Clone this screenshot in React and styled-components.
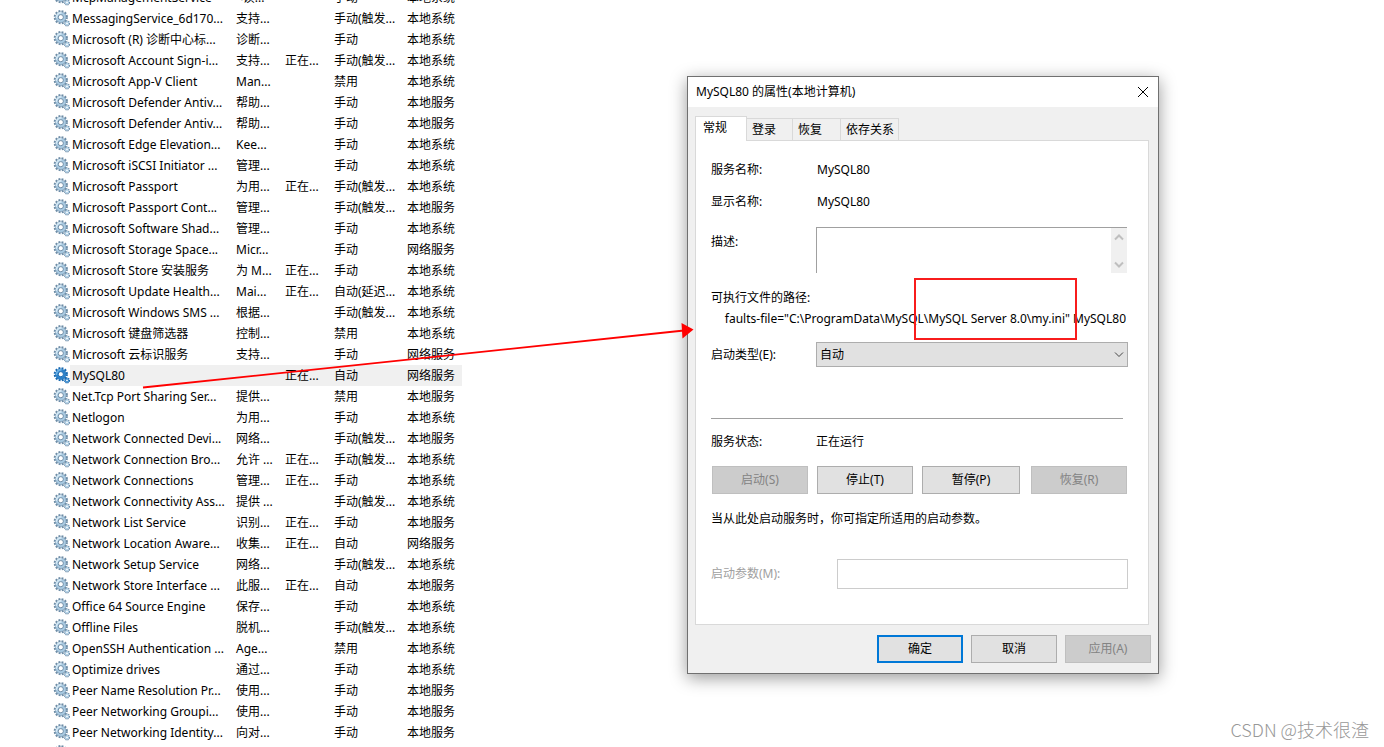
import React from 'react'
import styled, { createGlobalStyle, css } from 'styled-components'

const GlobalStyle = createGlobalStyle`
  * {
    box-sizing: border-box;
  }

  body {
    margin: 0;
    background-color: #fff;
    color: #000;
    font-family: 'Noto Sans', 'Noto Sans CJK SC', sans-serif;
    font-size: 12px;
    line-height: 20px;
  }

  button,
  input,
  textarea,
  select {
    font: inherit;
    color: inherit;
    border-radius: 0;
  }
`

const Desktop = styled.main`
  position: relative;
  height: 100vh;
  overflow: hidden;
`

/* services list */

const ServiceTable = styled.table`
  margin: -13px 0 0 53px;
  border-collapse: collapse;
  table-layout: fixed;
  width: 409px;
`

const ServiceRow = styled.tr`
  height: 21px;

  td:not(:first-child) {
    background-color: ${(props) => (props.$selected ? '#f0f0f0' : 'transparent')};
  }
`

const Cell = styled.td`
  padding: 0 0 0 2px;
  height: 21px;
  line-height: 21px;
  white-space: nowrap;
`

const IconCell = styled.td`
  padding: 0;
  line-height: 0;

  svg {
    display: block;
  }
`

/* properties window */

const Dialog = styled.section`
  position: absolute;
  left: 687px;
  top: 76px;
  width: 472px;
  border: 1px solid #707070;
  background-color: #f0f0f0;
  box-shadow: 0 4px 16px rgba(0, 0, 0, 0.4);
`

const TitleBar = styled.header`
  display: flex;
  align-items: center;
  justify-content: space-between;
  height: 30px;
  padding-left: 8px;
  background-color: #fff;
`

const Title = styled.h1`
  margin: 0;
  font-size: 12px;
  font-weight: normal;
`

const CloseButton = styled.button`
  display: flex;
  align-items: center;
  justify-content: center;
  width: 30px;
  height: 28px;
  padding: 0;
  border: none;
  background: none;
`

const TabList = styled.div`
  display: flex;
  align-items: flex-end;
  margin: 9px 9px 0 7px;
`

const Tab = styled.button`
  width: ${(props) => props.$width}px;
  height: 22px;
  padding: 0 5px;
  border: 1px solid #d9d9d9;
  border-width: 1px 1px 0 0;
  background-color: #f0f0f0;
  text-align: left;
  white-space: nowrap;

  ${(props) =>
    props.$active &&
    css`
      position: relative;
      height: 25px;
      margin-bottom: -1px;
      padding: 0 7px 3px;
      border-left-width: 1px;
      background-color: #fff;
    `}
`

const Panel = styled.div`
  margin: 0 9px 0 7px;
  padding: 13px 20px 35px 15px;
  border: 1px solid #d9d9d9;
  background-color: #fff;
`

const Field = styled.div`
  display: grid;
  grid-template-columns: 105px 1fr;
  align-items: center;
  min-height: ${(props) => props.$height || 20}px;
  margin-top: ${(props) => props.$gap || 0}px;
`

const Label = styled.label`
  white-space: nowrap;
  color: ${(props) => (props.$disabled ? '#a0a0a0' : 'inherit')};
`

const DescLabel = styled(Label)`
  align-self: start;
  padding-top: 5px;
`

const Value = styled.span`
  padding-left: 1px;
`

const Description = styled.div`
  display: flex;
  height: 46px;
  margin-right: 1px;
  border: 1px solid #a0a0a0;
  border-width: 1px 0 0 1px;
`

const DescriptionText = styled.textarea`
  flex: 1;
  min-width: 0;
  padding: 2px;
  border: none;
  outline: none;
  resize: none;
  overflow: hidden;
`

const ScrollBar = styled.div`
  display: flex;
  flex-direction: column;
  justify-content: space-between;
  align-items: center;
  width: 16px;
  padding: 6px 0 5px;
  background-color: #f0f0f0;
`

const PathLabel = styled.div`
  margin-top: 15px;
`

const Path = styled.div`
  display: flex;
  justify-content: flex-end;
  margin: 1px 2px 0 1px;
  overflow: hidden;
  white-space: nowrap;
`

const SelectBox = styled.div`
  position: relative;

  svg {
    position: absolute;
    right: 4px;
    top: 9px;
    pointer-events: none;
  }
`

const Select = styled.select`
  display: block;
  appearance: none;
  width: 100%;
  height: 25px;
  padding: 0 3px;
  border: 1px solid #adadad;
  background-color: #e1e1e1;
`

const Divider = styled.hr`
  height: 1px;
  margin: 51px 5px 0 0;
  border: none;
  background-color: #a0a0a0;
`

const Button = styled.button`
  width: ${(props) => props.$width || 96}px;
  height: 28px;
  padding: 0;
  border: 1px solid #adadad;
  background-color: #e1e1e1;

  ${(props) =>
    props.$primary &&
    css`
      border: 2px solid #0078d7;
    `}

  &:disabled {
    border-color: #bfbfbf;
    background-color: #cccccc;
    color: #838383;
  }
`

const Controls = styled.div`
  display: flex;
  gap: 9px;
  margin: 14px 1px 0;

  button:last-child {
    margin-left: auto;
  }
`

const Hint = styled.p`
  margin: 15px 0 0;
`

const ParamField = styled.div`
  display: flex;
  align-items: center;
  justify-content: space-between;
  margin-top: 30px;
`

const ParamInput = styled.input`
  width: 291px;
  height: 30px;
  padding: 0 4px;
  border: 1px solid #cccccc;
  background-color: #fff;
`

const Footer = styled.footer`
  display: flex;
  justify-content: flex-end;
  gap: 8px;
  padding: 10px 7px;
`

/* annotations */

const Arrow = styled.svg`
  position: absolute;
  left: 0;
  top: 0;
  pointer-events: none;
`

const Highlight = styled.div`
  position: absolute;
  left: 914px;
  top: 278px;
  width: 163px;
  height: 62px;
  border: 2px solid #f81c1c;
  pointer-events: none;
`

const Watermark = styled.div`
  position: absolute;
  right: 15px;
  bottom: 6px;
  color: #989898;
  font-family: 'Noto Sans CJK SC', sans-serif;
  font-size: 18px;
  font-weight: 300;
  line-height: 24px;
`

const GearIcon = ({ selected }) => {
  const edge = selected ? '#1768b0' : '#6d8ca6'
  const body = selected ? '#2c83cb' : '#a9cbe3'
  const shine = selected ? '#6db2e6' : '#d3e8f5'
  return (
    <svg width="17" height="17" viewBox="0 0 17 17" aria-hidden="true">
      <circle cx="7.8" cy="7.2" r="6.1" fill="none" stroke={edge} strokeWidth="2" strokeDasharray="1.9 1.3" />
      <circle cx="7.8" cy="7.2" r="5.3" fill={body} stroke={edge} strokeWidth="0.6" />
      <path d="M3.6 8a4.2 4.2 0 0 1 5-5" fill="none" stroke={shine} strokeWidth="1.6" />
      <circle cx="7.8" cy="7.2" r="2.6" fill="#fff" stroke={edge} strokeWidth="1" />
      <circle cx="14" cy="13.4" r="2.3" fill="none" stroke={edge} strokeWidth="1.6" strokeDasharray="1.1 0.7" />
      <circle cx="14" cy="13.4" r="1.5" fill="#fff" stroke={body} strokeWidth="1.2" />
    </svg>
  )
}

const Chevron = ({ up, color = '#444', size = 1 }) => (
  <svg width="10" height="7" viewBox="0 0 10 7" aria-hidden="true">
    <path
      d={up ? 'M1 5.5L5 1.5L9 5.5' : 'M1 1.5L5 5.5L9 1.5'}
      fill="none"
      stroke={color}
      strokeWidth={size}
    />
  </svg>
)

const services = [
  ['McpManagementService', '<读...', '', '手动', '本地系统'],
  ['MessagingService_6d170...', '支持...', '', '手动(触发...', '本地系统'],
  ['Microsoft (R) 诊断中心标...', '诊断...', '', '手动', '本地系统'],
  ['Microsoft Account Sign-i...', '支持...', '正在...', '手动(触发...', '本地系统'],
  ['Microsoft App-V Client', 'Man...', '', '禁用', '本地系统'],
  ['Microsoft Defender Antiv...', '帮助...', '', '手动', '本地服务'],
  ['Microsoft Defender Antiv...', '帮助...', '', '手动', '本地服务'],
  ['Microsoft Edge Elevation...', 'Kee...', '', '手动', '本地系统'],
  ['Microsoft iSCSI Initiator ...', '管理...', '', '手动', '本地系统'],
  ['Microsoft Passport', '为用...', '正在...', '手动(触发...', '本地系统'],
  ['Microsoft Passport Cont...', '管理...', '', '手动(触发...', '本地服务'],
  ['Microsoft Software Shad...', '管理...', '', '手动', '本地系统'],
  ['Microsoft Storage Space...', 'Micr...', '', '手动', '网络服务'],
  ['Microsoft Store 安装服务', '为 M...', '正在...', '手动', '本地系统'],
  ['Microsoft Update Health...', 'Mai...', '正在...', '自动(延迟...', '本地系统'],
  ['Microsoft Windows SMS ...', '根据...', '', '手动(触发...', '本地系统'],
  ['Microsoft 键盘筛选器', '控制...', '', '禁用', '本地系统'],
  ['Microsoft 云标识服务', '支持...', '', '手动', '网络服务'],
  ['MySQL80', '', '正在...', '自动', '网络服务'],
  ['Net.Tcp Port Sharing Ser...', '提供...', '', '禁用', '本地服务'],
  ['Netlogon', '为用...', '', '手动', '本地系统'],
  ['Network Connected Devi...', '网络...', '', '手动(触发...', '本地服务'],
  ['Network Connection Bro...', '允许 ...', '正在...', '手动(触发...', '本地系统'],
  ['Network Connections', '管理...', '正在...', '手动', '本地系统'],
  ['Network Connectivity Ass...', '提供 ...', '', '手动(触发...', '本地系统'],
  ['Network List Service', '识别...', '正在...', '手动', '本地服务'],
  ['Network Location Aware...', '收集...', '正在...', '自动', '网络服务'],
  ['Network Setup Service', '网络...', '', '手动(触发...', '本地系统'],
  ['Network Store Interface ...', '此服...', '正在...', '自动', '本地服务'],
  ['Office 64 Source Engine', '保存...', '', '手动', '本地系统'],
  ['Offline Files', '脱机...', '', '手动(触发...', '本地系统'],
  ['OpenSSH Authentication ...', 'Age...', '', '禁用', '本地系统'],
  ['Optimize drives', '通过...', '', '手动', '本地系统'],
  ['Peer Name Resolution Pr...', '使用...', '', '手动', '本地服务'],
  ['Peer Networking Groupi...', '使用...', '', '手动', '本地服务'],
  ['Peer Networking Identity...', '向对...', '', '手动', '本地服务'],
  ['', '', '', '', ''],
]

const ServiceList = () => (
  <ServiceTable>
    <colgroup>
      <col width="17" />
      <col width="164" />
      <col width="49" />
      <col width="49" />
      <col width="73" />
      <col />
    </colgroup>
    <tbody>
      {services.map((service, i) => {
        const selected = service[0] === 'MySQL80'
        return (
          <ServiceRow key={i} $selected={selected}>
            <IconCell>
              <GearIcon selected={selected} />
            </IconCell>
            {service.map((text, j) => (
              <Cell key={j}>{text}</Cell>
            ))}
          </ServiceRow>
        )
      })}
    </tbody>
  </ServiceTable>
)

const Properties = () => (
  <Dialog role="dialog" aria-labelledby="title">
    <TitleBar>
      <Title id="title">MySQL80 的属性(本地计算机)</Title>
      <CloseButton aria-label="关闭">
        <svg width="12" height="12" viewBox="0 0 12 12">
          <path d="M1 1L11 11M11 1L1 11" stroke="#000" strokeWidth="1" />
        </svg>
      </CloseButton>
    </TitleBar>

    <TabList role="tablist">
      <Tab role="tab" aria-selected="true" $active $width={52}>常规</Tab>
      <Tab role="tab" $width={46}>登录</Tab>
      <Tab role="tab" $width={48}>恢复</Tab>
      <Tab role="tab" $width={58}>依存关系</Tab>
    </TabList>

    <Panel role="tabpanel">
      <Field $height={32}>
        <span>服务名称:</span>
        <Value>MySQL80</Value>
      </Field>
      <Field $height={32}>
        <span>显示名称:</span>
        <Value>MySQL80</Value>
      </Field>
      <Field $gap={9}>
        <DescLabel htmlFor="description">描述:</DescLabel>
        <Description>
          <DescriptionText id="description" readOnly />
          <ScrollBar>
            <Chevron up color="#bfbfbf" size={2} />
            <Chevron color="#bfbfbf" size={2} />
          </ScrollBar>
        </Description>
      </Field>

      <PathLabel>可执行文件的路径:</PathLabel>
      <Path>
        <span>faults-file="C:\ProgramData\MySQL\MySQL Server 8.0\my.ini" MySQL80</span>
      </Path>

      <Field $gap={13}>
        <Label htmlFor="startup">启动类型(E):</Label>
        <SelectBox>
          <Select id="startup" defaultValue="auto">
            <option value="auto">自动</option>
            <option value="manual">手动</option>
            <option value="disabled">禁用</option>
          </Select>
          <Chevron />
        </SelectBox>
      </Field>

      <Divider />

      <Field $gap={13}>
        <span>服务状态:</span>
        <span>正在运行</span>
      </Field>
      <Controls>
        <Button disabled>启动(S)</Button>
        <Button>停止(T)</Button>
        <Button $width={98}>暂停(P)</Button>
        <Button disabled>恢复(R)</Button>
      </Controls>

      <Hint>当从此处启动服务时，你可指定所适用的启动参数。</Hint>

      <ParamField>
        <Label htmlFor="params" $disabled>启动参数(M):</Label>
        <ParamInput id="params" type="text" disabled />
      </ParamField>
    </Panel>

    <Footer>
      <Button $primary $width={86}>确定</Button>
      <Button $width={86}>取消</Button>
      <Button disabled $width={86}>应用(A)</Button>
    </Footer>
  </Dialog>
)

const App = () => {
  return (
    <Desktop>
      <GlobalStyle />
      <ServiceList />
      <Properties />
      <Arrow width="700" height="400" viewBox="0 0 700 400" aria-hidden="true">
        <path d="M143 387.5L684 330.5" stroke="#ff0000" strokeWidth="1.8" />
        <path d="M681.5 323L693.5 329.5L682.5 338.5Z" fill="#ff0000" />
      </Arrow>
      <Highlight />
      <Watermark>CSDN @技术很渣</Watermark>
    </Desktop>
  )
}

export default App
